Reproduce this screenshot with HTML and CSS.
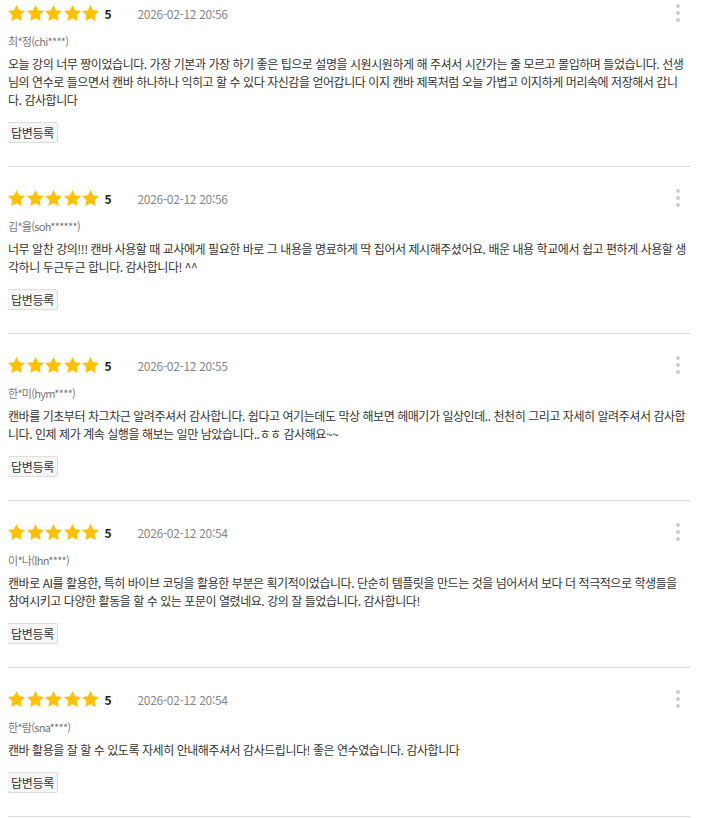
FILE: index.html
```html
<!DOCTYPE html>
<html lang="ko">
<head>
<meta charset="utf-8">
<link rel="stylesheet" href="styles.css">
</head>
<body>
<div class="list">
  <div class="item">
    <div class="head">
      <div class="stars">
        <svg viewBox="2 2 20 19"><path d="M12 2l3.09 6.26L22 9.27l-5 4.87 1.18 6.88L12 17.77l-6.18 3.25L7 14.14 2 9.27l6.91-1.01L12 2z"/></svg>
        <svg viewBox="2 2 20 19"><path d="M12 2l3.09 6.26L22 9.27l-5 4.87 1.18 6.88L12 17.77l-6.18 3.25L7 14.14 2 9.27l6.91-1.01L12 2z"/></svg>
        <svg viewBox="2 2 20 19"><path d="M12 2l3.09 6.26L22 9.27l-5 4.87 1.18 6.88L12 17.77l-6.18 3.25L7 14.14 2 9.27l6.91-1.01L12 2z"/></svg>
        <svg viewBox="2 2 20 19"><path d="M12 2l3.09 6.26L22 9.27l-5 4.87 1.18 6.88L12 17.77l-6.18 3.25L7 14.14 2 9.27l6.91-1.01L12 2z"/></svg>
        <svg viewBox="2 2 20 19"><path d="M12 2l3.09 6.26L22 9.27l-5 4.87 1.18 6.88L12 17.77l-6.18 3.25L7 14.14 2 9.27l6.91-1.01L12 2z"/></svg>
      </div>
      <span class="score">5</span>
      <span class="date">2026-02-12 20:56</span>
      <span class="more"><i></i><i></i><i></i></span>
    </div>
    <div class="name">최*정(chi****)</div>
    <p class="text">오늘 강의 너무 짱이었습니다. 가장 기본과 가장 하기 좋은 팁으로 설명을 시원시원하게 해 주셔서 시간가는 줄 모르고 몰입하며 들었습니다. 선생님의 연수로 들으면서 캔바 하나하나 익히고 할 수 있다 자신감을 얻어갑니다 이지 캔바 제목처럼 오늘 가볍고 이지하게 머리속에 저장해서 갑니다. 감사합니다</p>
    <button class="reply">답변등록</button>
  </div>
  <div class="item">
    <div class="head">
      <div class="stars">
        <svg viewBox="2 2 20 19"><path d="M12 2l3.09 6.26L22 9.27l-5 4.87 1.18 6.88L12 17.77l-6.18 3.25L7 14.14 2 9.27l6.91-1.01L12 2z"/></svg>
        <svg viewBox="2 2 20 19"><path d="M12 2l3.09 6.26L22 9.27l-5 4.87 1.18 6.88L12 17.77l-6.18 3.25L7 14.14 2 9.27l6.91-1.01L12 2z"/></svg>
        <svg viewBox="2 2 20 19"><path d="M12 2l3.09 6.26L22 9.27l-5 4.87 1.18 6.88L12 17.77l-6.18 3.25L7 14.14 2 9.27l6.91-1.01L12 2z"/></svg>
        <svg viewBox="2 2 20 19"><path d="M12 2l3.09 6.26L22 9.27l-5 4.87 1.18 6.88L12 17.77l-6.18 3.25L7 14.14 2 9.27l6.91-1.01L12 2z"/></svg>
        <svg viewBox="2 2 20 19"><path d="M12 2l3.09 6.26L22 9.27l-5 4.87 1.18 6.88L12 17.77l-6.18 3.25L7 14.14 2 9.27l6.91-1.01L12 2z"/></svg>
      </div>
      <span class="score">5</span>
      <span class="date">2026-02-12 20:56</span>
      <span class="more"><i></i><i></i><i></i></span>
    </div>
    <div class="name">김*을(soh******)</div>
    <p class="text">너무 알찬 강의!!! 캔바 사용할 때 교사에게 필요한 바로 그 내용을 명료하게 딱 집어서 제시해주셨어요. 배운 내용 학교에서 쉽고 편하게 사용할 생각하니 두근두근 합니다. 감사합니다! ^^</p>
    <button class="reply">답변등록</button>
  </div>
  <div class="item">
    <div class="head">
      <div class="stars">
        <svg viewBox="2 2 20 19"><path d="M12 2l3.09 6.26L22 9.27l-5 4.87 1.18 6.88L12 17.77l-6.18 3.25L7 14.14 2 9.27l6.91-1.01L12 2z"/></svg>
        <svg viewBox="2 2 20 19"><path d="M12 2l3.09 6.26L22 9.27l-5 4.87 1.18 6.88L12 17.77l-6.18 3.25L7 14.14 2 9.27l6.91-1.01L12 2z"/></svg>
        <svg viewBox="2 2 20 19"><path d="M12 2l3.09 6.26L22 9.27l-5 4.87 1.18 6.88L12 17.77l-6.18 3.25L7 14.14 2 9.27l6.91-1.01L12 2z"/></svg>
        <svg viewBox="2 2 20 19"><path d="M12 2l3.09 6.26L22 9.27l-5 4.87 1.18 6.88L12 17.77l-6.18 3.25L7 14.14 2 9.27l6.91-1.01L12 2z"/></svg>
        <svg viewBox="2 2 20 19"><path d="M12 2l3.09 6.26L22 9.27l-5 4.87 1.18 6.88L12 17.77l-6.18 3.25L7 14.14 2 9.27l6.91-1.01L12 2z"/></svg>
      </div>
      <span class="score">5</span>
      <span class="date">2026-02-12 20:55</span>
      <span class="more"><i></i><i></i><i></i></span>
    </div>
    <div class="name">한*미(hym****)</div>
    <p class="text">캔바를 기초부터 차그차근 알려주셔서 감사합니다. 쉽다고 여기는데도 막상 해보면 헤매기가 일상인데.. 천천히 그리고 자세히 알려주셔서 감사합니다. 인제 제가 계속 실행을 해보는 일만 남았습니다..ㅎㅎ 감사해요~~</p>
    <button class="reply">답변등록</button>
  </div>
  <div class="item">
    <div class="head">
      <div class="stars">
        <svg viewBox="2 2 20 19"><path d="M12 2l3.09 6.26L22 9.27l-5 4.87 1.18 6.88L12 17.77l-6.18 3.25L7 14.14 2 9.27l6.91-1.01L12 2z"/></svg>
        <svg viewBox="2 2 20 19"><path d="M12 2l3.09 6.26L22 9.27l-5 4.87 1.18 6.88L12 17.77l-6.18 3.25L7 14.14 2 9.27l6.91-1.01L12 2z"/></svg>
        <svg viewBox="2 2 20 19"><path d="M12 2l3.09 6.26L22 9.27l-5 4.87 1.18 6.88L12 17.77l-6.18 3.25L7 14.14 2 9.27l6.91-1.01L12 2z"/></svg>
        <svg viewBox="2 2 20 19"><path d="M12 2l3.09 6.26L22 9.27l-5 4.87 1.18 6.88L12 17.77l-6.18 3.25L7 14.14 2 9.27l6.91-1.01L12 2z"/></svg>
        <svg viewBox="2 2 20 19"><path d="M12 2l3.09 6.26L22 9.27l-5 4.87 1.18 6.88L12 17.77l-6.18 3.25L7 14.14 2 9.27l6.91-1.01L12 2z"/></svg>
      </div>
      <span class="score">5</span>
      <span class="date">2026-02-12 20:54</span>
      <span class="more"><i></i><i></i><i></i></span>
    </div>
    <div class="name">이*나(lhn****)</div>
    <p class="text">캔바로 AI를 활용한, 특히 바이브 코딩을 활용한 부분은 획기적이었습니다. 단순히 템플릿을 만드는 것을 넘어서서 보다 더 적극적으로 학생들을 참여시키고 다양한 활동을 할 수 있는 포문이 열렸네요. 강의 잘 들었습니다. 감사합니다!</p>
    <button class="reply">답변등록</button>
  </div>
  <div class="item">
    <div class="head">
      <div class="stars">
        <svg viewBox="2 2 20 19"><path d="M12 2l3.09 6.26L22 9.27l-5 4.87 1.18 6.88L12 17.77l-6.18 3.25L7 14.14 2 9.27l6.91-1.01L12 2z"/></svg>
        <svg viewBox="2 2 20 19"><path d="M12 2l3.09 6.26L22 9.27l-5 4.87 1.18 6.88L12 17.77l-6.18 3.25L7 14.14 2 9.27l6.91-1.01L12 2z"/></svg>
        <svg viewBox="2 2 20 19"><path d="M12 2l3.09 6.26L22 9.27l-5 4.87 1.18 6.88L12 17.77l-6.18 3.25L7 14.14 2 9.27l6.91-1.01L12 2z"/></svg>
        <svg viewBox="2 2 20 19"><path d="M12 2l3.09 6.26L22 9.27l-5 4.87 1.18 6.88L12 17.77l-6.18 3.25L7 14.14 2 9.27l6.91-1.01L12 2z"/></svg>
        <svg viewBox="2 2 20 19"><path d="M12 2l3.09 6.26L22 9.27l-5 4.87 1.18 6.88L12 17.77l-6.18 3.25L7 14.14 2 9.27l6.91-1.01L12 2z"/></svg>
      </div>
      <span class="score">5</span>
      <span class="date">2026-02-12 20:54</span>
      <span class="more"><i></i><i></i><i></i></span>
    </div>
    <div class="name">한*람(sna****)</div>
    <p class="text">캔바 활용을 잘 할 수 있도록 자세히 안내해주셔서 감사드립니다! 좋은 연수였습니다. 감사합니다</p>
    <button class="reply">답변등록</button>
  </div>
</div>
</body>
</html>
```
FILE: styles.css
```css
html, body {
  background: #fff;
}
body {
  margin: 0 8px;
  font-family: "Noto Sans CJK KR", "Noto Sans", sans-serif;
  color: #333;
  overflow: hidden;
}
.list {
  width: 682px;
  margin-top: -18px;
}
.item {
  padding: 23px 0 23px;
  border-bottom: 1px solid #ddd;
}
.head {
  display: flex;
  align-items: center;
  height: 16px;
}
.stars {
  display: flex;
  gap: 1.6px;
}
.stars svg {
  width: 17px;
  height: 16px;
  fill: #ffc107;
}
.score {
  margin-left: 5px;
  font-size: 12px;
  font-weight: 700;
  color: #222;
}
.date {
  margin-left: 26px;
  font-size: 12px;
  letter-spacing: -0.3px;
  color: #888;
}
.more {
  margin-left: auto;
  margin-right: 10px;
  display: flex;
  flex-direction: column;
  gap: 3px;
}
.more i {
  width: 4px;
  height: 4px;
  border-radius: 50%;
  background: #ccc;
}
.name {
  margin-top: 12px;
  font-size: 11px;
  letter-spacing: -0.7px;
  line-height: 16px;
  color: #777;
}
.text {
  margin: 6px 0 0;
  font-size: 12px;
  letter-spacing: -0.45px;
  line-height: 18px;
  color: #333;
  padding-right: 0;
}
.reply {
  display: block;
  margin-top: 13px;
  margin-left: -1px;
  height: 21px;
  padding: 0 3px;
  font-family: inherit;
  font-size: 12px;
  letter-spacing: -0.3px;
  color: #333;
  background: #f6f6f6;
  border: 1px solid #ddd;
  border-radius: 2px;
}
```
